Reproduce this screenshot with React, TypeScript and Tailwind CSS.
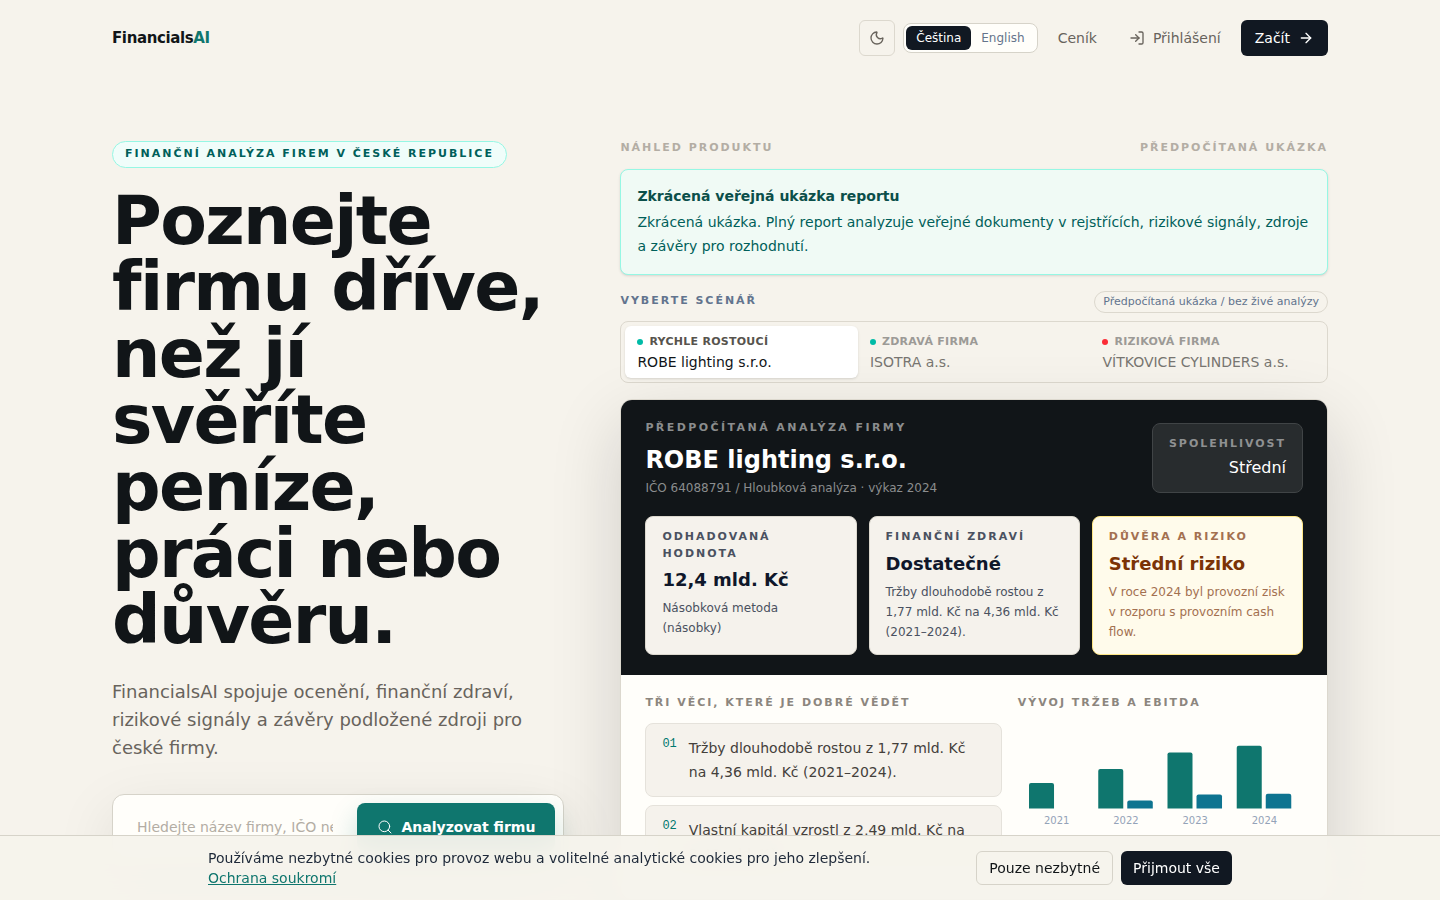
import { ArrowRight, LogIn, Moon, Search } from 'lucide-react';

const labelClass = 'text-[11px] leading-normal font-bold uppercase';

const scenarios = [
  { tag: 'Rychle rostoucí', name: 'ROBE lighting s.r.o.', dot: 'bg-[#00bba7]', active: true },
  { tag: 'Zdravá firma', name: 'ISOTRA a.s.', dot: 'bg-[#00bba7]', active: false },
  { tag: 'Riziková firma', name: 'VÍTKOVICE CYLINDERS a.s.', dot: 'bg-[#fb2c36]', active: false },
];

const metrics = [
  {
    label: 'Odhadovaná hodnota',
    value: '12,4 mld. Kč',
    note: 'Násobková metoda (násobky)',
    tone: 'border-[#dcd8ce] bg-[#f5f2ec] text-[#0f172a]',
    soft: 'text-[#4a5160]',
  },
  {
    label: 'Finanční zdraví',
    value: 'Dostatečné',
    note: 'Tržby dlouhodobě rostou z 1,77 mld. Kč na 4,36 mld. Kč (2021–2024).',
    tone: 'border-[#dcd8ce] bg-[#f5f2ec] text-[#0f172a]',
    soft: 'text-[#4a5160]',
  },
  {
    label: 'Důvěra a riziko',
    value: 'Střední riziko',
    note: 'V roce 2024 byl provozní zisk v rozporu s provozním cash flow.',
    tone: 'border-[#fee685] bg-[#fffbeb] text-[#7b3306]',
    soft: 'text-[#a37050]',
  },
];

const facts = [
  'Tržby dlouhodobě rostou z 1,77 mld. Kč na 4,36 mld. Kč (2021–2024).',
  'Vlastní kapitál vzrostl z 2,49 mld. Kč na 3,48 mld. Kč.',
];

const years = [
  { year: '2021', revenue: 25.5, ebitda: 0 },
  { year: '2022', revenue: 39.5, ebitda: 8 },
  { year: '2023', revenue: 56, ebitda: 14 },
  { year: '2024', revenue: 62.7, ebitda: 14.7 },
];

function Header() {
  return (
    <header className="mx-auto flex w-full max-w-7xl items-center justify-between px-8 py-5">
      <a href="#" className="text-[15px] font-bold tracking-tight text-[#111518]">
        Financials<span className="text-[#0f766e]">AI</span>
      </a>
      <nav className="flex items-center gap-2 text-sm text-[#68635c]">
        <button
          type="button"
          aria-label="Tmavý režim"
          className="flex size-9 items-center justify-center rounded-md border border-[#dcd8ce]"
        >
          <Moon className="size-4" />
        </button>
        <div className="flex rounded-lg border border-[#d6d3c9] bg-[#fffefa] p-0.5 text-xs">
          <button type="button" className="rounded-md bg-[#111822] px-2.5 py-1 text-white">
            Čeština
          </button>
          <button type="button" className="rounded-md px-2.5 py-1 text-[#64748b]">
            English
          </button>
        </div>
        <a href="#" className="px-3 py-2">
          Ceník
        </a>
        <a href="#" className="flex items-center gap-2 px-3 py-2">
          <LogIn className="size-4" />
          Přihlášení
        </a>
        <a href="#" className="flex items-center gap-2 rounded-md bg-[#111822] px-3.5 py-2 text-white">
          Začít
          <ArrowRight className="size-4" />
        </a>
      </nav>
    </header>
  );
}

function Intro() {
  return (
    <section className="min-w-0">
      <p
        className={`${labelClass} inline-flex rounded-full border border-[#96f7e4] bg-[#f0fdfa] px-3 py-1 tracking-[0.18em] text-[#005f5a]`}
      >
        Finanční analýza firem v České republice
      </p>
      <h1 className="mt-5 text-[68px] leading-[0.98] font-bold tracking-tight text-[#111518]">
        Poznejte firmu dříve, než jí svěříte peníze, práci nebo důvěru.
      </h1>
      <p className="mt-6 text-lg leading-7 text-[#68635c]">
        FinancialsAI spojuje ocenění, finanční zdraví, rizikové signály a závěry podložené zdroji pro české firmy.
      </p>
      <form className="mt-8 flex gap-2 rounded-xl border border-[#d6d3c9] bg-[#fffefa] p-2 shadow-[0_20px_60px_rgba(17,21,24,0.10)]">
        <input
          type="text"
          aria-label="Hledat firmu"
          placeholder="Hledejte název firmy, IČO nebo DIČ"
          className="h-12 min-w-0 flex-1 bg-transparent px-4 text-sm outline-none placeholder:text-[#b3ada4]"
        />
        <button
          type="button"
          className="flex h-12 items-center gap-2 rounded-lg bg-[#0f766e] px-5 text-sm font-bold whitespace-nowrap text-white shadow-[0_12px_28px_rgba(15,118,110,0.22)]"
        >
          <Search className="size-4" strokeWidth={1.5} />
          Analyzovat firmu
        </button>
      </form>
    </section>
  );
}

function Chart() {
  return (
    <svg viewBox="0 0 285 112" className="w-full" role="img" aria-label="Vývoj tržeb a EBITDA">
      {years.map((item, i) => {
        const x = 11 + i * 69.2;
        return (
          <g key={item.year}>
            <path
              d={`M${x} 85.5v${2 - item.revenue}q0-2 2-2h21q2 0 2 2v${item.revenue - 2}z`}
              fill="#0f766e"
            />
            {item.ebitda > 0 && (
              <path
                d={`M${x + 29} 85.5v${2 - item.ebitda}q0-2 2-2h21.5q2 0 2 2v${item.ebitda - 2}z`}
                fill="#0e7490"
              />
            )}
            <text x={x + 27.7} y={100.5} textAnchor="middle" fontSize="10" fill="#94a3b8">
              {item.year}
            </text>
          </g>
        );
      })}
    </svg>
  );
}

function Report() {
  return (
    <article className="mt-4 overflow-hidden rounded-xl border border-[#dcd8ce] bg-[#fffefa] shadow-[0_24px_70px_rgba(17,21,24,0.16)]">
      <div className="bg-[#111518] px-6 py-5">
        <div className="flex items-center justify-between gap-4">
          <div>
            <p className={`${labelClass} tracking-[0.22em] text-[#8b8d8e]`}>Předpočítaná analýza firmy</p>
            <h2 className="mt-2 text-2xl leading-8 font-bold text-white">ROBE lighting s.r.o.</h2>
            <p className="mt-1 text-xs text-[#8b8d8e]">IČO 64088791 / Hloubková analýza · výkaz 2024</p>
          </div>
          <div className="rounded-lg border border-[#404446] bg-[#282c2e] px-4 py-3 text-right">
            <p className={`${labelClass} tracking-[0.18em] text-[#8f9192]`}>Spolehlivost</p>
            <p className="mt-1 text-base text-white">Střední</p>
          </div>
        </div>
        <div className="mt-5 grid grid-cols-3 gap-3">
          {metrics.map((m) => (
            <div key={m.label} className={`rounded-lg border px-4 py-3 ${m.tone}`}>
              <p className={`${labelClass} tracking-[0.18em] ${m.soft}`}>{m.label}</p>
              <p className="mt-1 text-lg leading-7 font-bold">{m.value}</p>
              <p className={`mt-1 text-xs leading-5 ${m.soft}`}>{m.note}</p>
            </div>
          ))}
        </div>
      </div>
      <div className="grid grid-cols-[5fr_4fr] gap-4 px-6 py-5">
        <div>
          <h3 className={`${labelClass} tracking-[0.18em] text-[#8c867e]`}>Tři věci, které je dobré vědět</h3>
          <ol className="mt-3 grid gap-2">
            {facts.map((fact, i) => (
              <li key={fact} className="flex gap-3 rounded-lg border border-[#e5e2db] bg-[#f5f2ec] px-4 py-3">
                <span className="font-['Liberation_Mono',monospace] text-xs text-[#00786f]">0{i + 1}</span>
                <p className="text-sm leading-6 text-[#44403b]">{fact}</p>
              </li>
            ))}
          </ol>
        </div>
        <div>
          <h3 className={`${labelClass} mb-3 tracking-[0.18em] text-[#8c867e]`}>Vývoj tržeb a EBITDA</h3>
          <Chart />
        </div>
      </div>
    </article>
  );
}

function Preview() {
  return (
    <section className="min-w-0">
      <div className={`${labelClass} flex justify-between tracking-[0.18em] text-[#b3ada4]`}>
        <p>Náhled produktu</p>
        <p>Předpočítaná ukázka</p>
      </div>
      <div className="mt-3 rounded-lg border border-[#96f7e4] bg-[#f0faf5] p-4 text-sm shadow-sm">
        <p className="font-bold text-[#0b4f4a]">Zkrácená veřejná ukázka reportu</p>
        <p className="mt-1 leading-6 text-[#005f5a]">
          Zkrácená ukázka. Plný report analyzuje veřejné dokumenty v rejstřících, rizikové signály, zdroje a závěry
          pro rozhodnutí.
        </p>
      </div>
      <div className="mt-4 flex items-center justify-between">
        <h2 className={`${labelClass} tracking-[0.18em] text-[#62748e]`}>Vyberte scénář</h2>
        <p className="rounded-full border border-[#dcd8ce] px-2 py-0.5 text-[11px] leading-4 text-[#62748e]">
          Předpočítaná ukázka / bez živé analýzy
        </p>
      </div>
      <div className="mt-2 grid grid-cols-3 rounded-lg border border-[#dcd8ce] p-1">
        {scenarios.map((s) => (
          <button
            key={s.name}
            type="button"
            className={`rounded-md px-3 pt-2 pb-1.5 text-left ${s.active ? 'bg-white text-[#111518] shadow-sm' : 'text-[#777570]'}`}
          >
            <span
              className={`flex items-center gap-1.5 text-[11px] leading-4 font-bold tracking-wide uppercase ${s.active ? 'text-[#57534d]' : 'text-[#9c9a96]'}`}
            >
              <span className={`size-1.5 rounded-full ${s.dot}`} />
              {s.tag}
            </span>
            <span className="mt-0.5 block text-sm">{s.name}</span>
          </button>
        ))}
      </div>
      <Report />
    </section>
  );
}

function CookieBar() {
  return (
    <aside
      aria-label="Cookies"
      className="fixed inset-x-0 bottom-0 border-t border-[#d6d3c9] bg-[#f6f3ec]/95 py-3 text-sm backdrop-blur-md"
    >
      <div className="mx-auto flex max-w-5xl items-center justify-between gap-4">
        <p className="max-w-2xl text-[#1e2939]">
          Používáme nezbytné cookies pro provoz webu a volitelné analytické cookies pro jeho zlepšení.{' '}
          <a href="#" className="text-[#0f766e] underline">
            Ochrana soukromí
          </a>
        </p>
        <div className="flex gap-2">
          <button type="button" className="rounded-md border border-[#d6d3c9] px-3 py-1.5 text-[#111518]">
            Pouze nezbytné
          </button>
          <button type="button" className="rounded-md bg-[#111822] px-3 py-1.5 text-white">
            Přijmout vše
          </button>
        </div>
      </div>
    </aside>
  );
}

export default function App() {
  return (
    <div className="min-h-screen bg-[#f6f3ec] font-['DejaVu_Sans',sans-serif]">
      <Header />
      <main className="mx-auto grid max-w-7xl grid-cols-[39fr_61fr] gap-14 px-8 pt-16 pb-20">
        <Intro />
        <Preview />
      </main>
      <CookieBar />
    </div>
  );
}
